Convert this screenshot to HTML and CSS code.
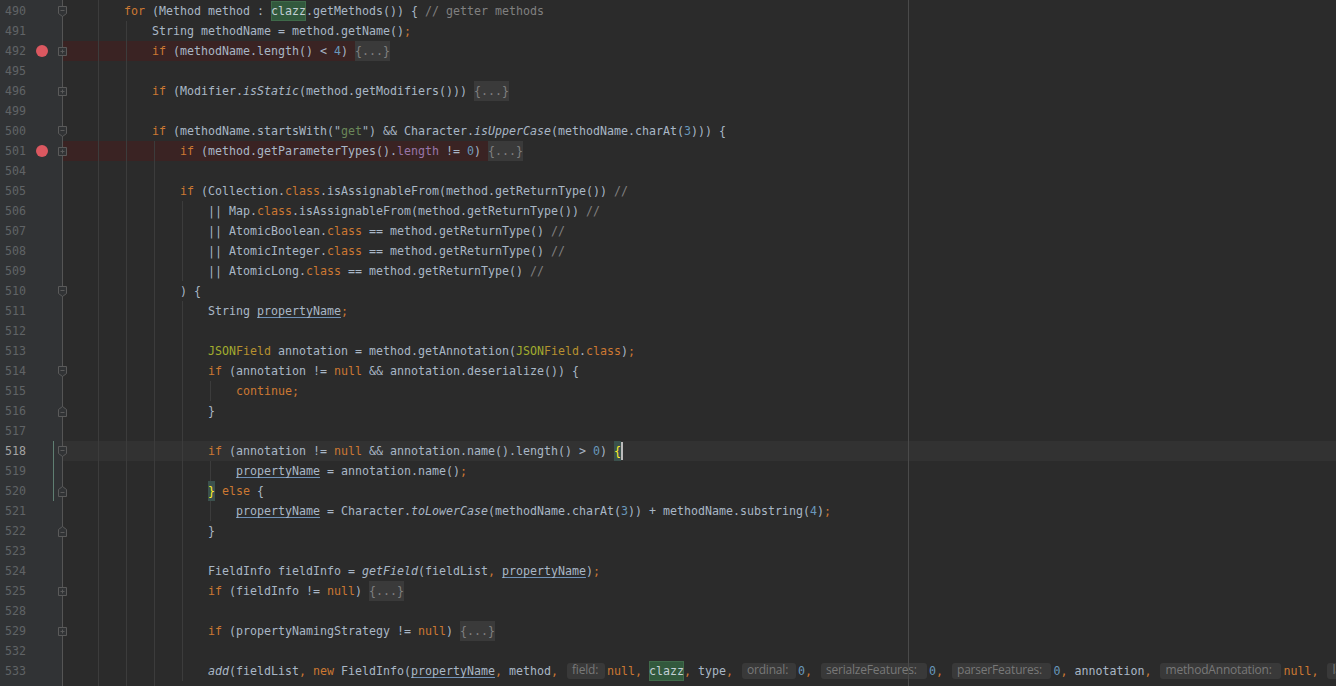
FILE: index.html
```html
<!DOCTYPE html>
<html lang="en">
<head>
  <meta charset="UTF-8" />
  <title>FieldInfo parser - editor</title>
  <link rel="stylesheet" href="styles.css">
</head>
<body>
  <svg class="defs" width="0" height="0">
    <symbol id="fold-plus" viewBox="0 0 9 11"><path d="M.5 1.5h8v8h-8z M2.5 5.5h4 M4.5 3.5v4"/></symbol>
    <symbol id="fold-open" viewBox="0 0 9 11"><path d="M.5.5h8v7l-4 3-4-3z M2.5 4.5h4"/></symbol>
    <symbol id="fold-close" viewBox="0 0 9 11"><path d="M.5 10.5h8v-7l-4-3-4 3z M2.5 6.5h4"/></symbol>
  </svg>

  <div class="editor">
    <div class="guide g98"></div>
    <div class="guide g126"></div>
    <div class="guide g154"></div>
    <div class="guide g182a"></div>
    <div class="guide g182b"></div>
    <div class="guide g210a"></div>
    <div class="guide g210b"></div>
    <div class="guide g210c"></div>
    <div class="margin-line"></div>
    <div class="change-bar"></div>

    <div class="row"><div class="gutter"><span class="num">490</span><svg class="fold"><use href="#fold-open"/></svg></div><div class="code">        <b>for</b> (Method method : <span class="hl">clazz</span>.getMethods()) { <span class="c">// getter methods</span></div></div>
    <div class="row"><div class="gutter"><span class="num">491</span></div><div class="code">            String methodName = method.getName()<b>;</b></div></div>
    <div class="row bp"><div class="gutter"><span class="num">492</span><span class="dot"></span><svg class="fold"><use href="#fold-plus"/></svg></div><div class="code"><span class="bp-text">            <b>if</b> (methodName.length() &lt; <span class="n">4</span>) </span><span class="ph">{...}</span></div></div>
    <div class="row"><div class="gutter"><span class="num">495</span></div><div class="code"></div></div>
    <div class="row"><div class="gutter"><span class="num">496</span><svg class="fold"><use href="#fold-plus"/></svg></div><div class="code">            <b>if</b> (Modifier.<em>isStatic</em>(method.getModifiers())) <span class="ph">{...}</span></div></div>
    <div class="row"><div class="gutter"><span class="num">499</span></div><div class="code"></div></div>
    <div class="row"><div class="gutter"><span class="num">500</span><svg class="fold"><use href="#fold-open"/></svg></div><div class="code">            <b>if</b> (methodName.startsWith("<span class="s">get</span>") &amp;&amp; Character.<em>isUpperCase</em>(methodName.charAt(<span class="n">3</span>))) {</div></div>
    <div class="row bp"><div class="gutter"><span class="num">501</span><span class="dot"></span><svg class="fold"><use href="#fold-plus"/></svg></div><div class="code"><span class="bp-text">                <b>if</b> (method.getParameterTypes().<span class="f">length</span> != <span class="n">0</span>) </span><span class="ph">{...}</span></div></div>
    <div class="row"><div class="gutter"><span class="num">504</span></div><div class="code"></div></div>
    <div class="row"><div class="gutter"><span class="num">505</span></div><div class="code">                <b>if</b> (Collection.<b>class</b>.isAssignableFrom(method.getReturnType()) <span class="c">//</span></div></div>
    <div class="row"><div class="gutter"><span class="num">506</span></div><div class="code">                    || Map.<b>class</b>.isAssignableFrom(method.getReturnType()) <span class="c">//</span></div></div>
    <div class="row"><div class="gutter"><span class="num">507</span></div><div class="code">                    || AtomicBoolean.<b>class</b> == method.getReturnType() <span class="c">//</span></div></div>
    <div class="row"><div class="gutter"><span class="num">508</span></div><div class="code">                    || AtomicInteger.<b>class</b> == method.getReturnType() <span class="c">//</span></div></div>
    <div class="row"><div class="gutter"><span class="num">509</span></div><div class="code">                    || AtomicLong.<b>class</b> == method.getReturnType() <span class="c">//</span></div></div>
    <div class="row"><div class="gutter"><span class="num">510</span><svg class="fold"><use href="#fold-open"/></svg></div><div class="code">                ) {</div></div>
    <div class="row"><div class="gutter"><span class="num">511</span></div><div class="code">                    String <u>propertyName</u><b>;</b></div></div>
    <div class="row"><div class="gutter"><span class="num">512</span></div><div class="code"></div></div>
    <div class="row"><div class="gutter"><span class="num">513</span></div><div class="code">                    <span class="a1">JSON</span><span class="a2">Field</span> annotation = method.getAnnotation(<span class="a1">JSON</span><span class="a2">Field</span>.<b>class</b>)<b>;</b></div></div>
    <div class="row"><div class="gutter"><span class="num">514</span><svg class="fold"><use href="#fold-open"/></svg></div><div class="code">                    <b>if</b> (annotation != <b>null</b> &amp;&amp; annotation.deserialize()) {</div></div>
    <div class="row"><div class="gutter"><span class="num">515</span></div><div class="code">                        <b>continue;</b></div></div>
    <div class="row"><div class="gutter"><span class="num">516</span><svg class="fold"><use href="#fold-close"/></svg></div><div class="code">                    }</div></div>
    <div class="row"><div class="gutter"><span class="num">517</span></div><div class="code"></div></div>
    <div class="row current"><div class="gutter"><span class="num">518</span><svg class="fold"><use href="#fold-open"/></svg></div><div class="code">                    <b>if</b> (annotation != <b>null</b> &amp;&amp; annotation.name().length() &gt; <span class="n">0</span>) <span class="brace">{</span><span class="caret"></span></div></div>
    <div class="row"><div class="gutter"><span class="num">519</span></div><div class="code">                        <u>propertyName</u> = annotation.name()<b>;</b></div></div>
    <div class="row"><div class="gutter"><span class="num">520</span><svg class="fold"><use href="#fold-close"/></svg></div><div class="code">                    <span class="brace">}</span> <b>else</b> {</div></div>
    <div class="row"><div class="gutter"><span class="num">521</span></div><div class="code">                        <u>propertyName</u> = Character.<em>toLowerCase</em>(methodName.charAt(<span class="n">3</span>)) + methodName.substring(<span class="n">4</span>)<b>;</b></div></div>
    <div class="row"><div class="gutter"><span class="num">522</span><svg class="fold"><use href="#fold-close"/></svg></div><div class="code">                    }</div></div>
    <div class="row"><div class="gutter"><span class="num">523</span></div><div class="code"></div></div>
    <div class="row"><div class="gutter"><span class="num">524</span></div><div class="code">                    FieldInfo fieldInfo = <em>getField</em>(fieldList<b>,</b> <u>propertyName</u>)<b>;</b></div></div>
    <div class="row"><div class="gutter"><span class="num">525</span><svg class="fold"><use href="#fold-plus"/></svg></div><div class="code">                    <b>if</b> (fieldInfo != <b>null</b>) <span class="ph">{...}</span></div></div>
    <div class="row"><div class="gutter"><span class="num">528</span></div><div class="code"></div></div>
    <div class="row"><div class="gutter"><span class="num">529</span><svg class="fold"><use href="#fold-plus"/></svg></div><div class="code">                    <b>if</b> (propertyNamingStrategy != <b>null</b>) <span class="ph">{...}</span></div></div>
    <div class="row"><div class="gutter"><span class="num">532</span></div><div class="code"></div></div>
    <div class="row"><div class="gutter"><span class="num">533</span></div><div class="code">                    <em>add</em>(fieldList<b>,</b> <b>new</b> FieldInfo(<u>propertyName</u><b>,</b> method<b>,</b> <span class="hint w38">field:</span><b>null,</b> <span class="hl">clazz</span><b>,</b> type<b>,</b> <span class="hint w54">ordinal:</span><span class="n">0</span><b>,</b> <span class="hint w106">serialzeFeatures:</span><span class="n">0</span><b>,</b> <span class="hint w100">parserFeatures:</span><span class="n">0</span><b>,</b> annotation<b>,</b> <span class="hint w121">methodAnnotation:</span><b>null,</b> <span class="hint w38">label:</span></div></div>
    <div class="row rest"><div class="gutter"></div><div class="code"></div></div>
  </div>
</body>
</html>
```

FILE: styles.css
```css
html, body {
  margin: 0;
  height: 100%;
  overflow: hidden;
}

.defs {
  position: absolute;
}

.editor {
  position: relative;
  display: flex;
  flex-direction: column;
  height: 686px;
  background-color: #2b2b2b;
  font-family: 'DejaVu Sans Mono', monospace;
  font-size: 11.63px;
  color: #a9b7c6;
  overflow: hidden;
}

/* one pixel of gutter above the first line */
.editor::before {
  content: "";
  flex: none;
  width: 62px;
  height: 1px;
  background-color: #313335;
  border-right: 1px solid #555555;
}

/* one editor line */
.row {
  display: flex;
  flex: none;
  height: 20px;
  line-height: 20px;
}

.row.rest {
  flex: 1;
}

.row.current {
  background-color: #323232;
}

.gutter {
  position: relative;
  flex: none;
  box-sizing: border-box;
  width: 63px;
  padding-left: 5px;
  background-color: #313335;
  border-right: 1px solid #555555;
}

.num {
  color: #606366;
}

.current .num {
  color: #a4a3a3;
}

.dot {
  position: absolute;
  left: 36px;
  top: 4px;
  width: 12px;
  height: 12px;
  border-radius: 50%;
  background-color: #db5860;
}

.fold {
  position: absolute;
  left: 58px;
  top: 5px;
  width: 9px;
  height: 11px;
  fill: #313335;
  stroke: #5a5a5a;
  stroke-width: 1;
}

.code {
  flex: 1;
  padding-left: 5px;
  white-space: pre;
}

/* the breakpoint tint stops where the folded block starts */
.bp .code {
  display: flex;
  padding-left: 0;
}

.bp-text {
  padding-left: 5px;
  background-color: #3a2323;
}

/* syntax colours */
.code b {
  font-weight: normal;
  color: #cc7832;
}

.code em {
  font-style: italic;
}

.code u {
  text-decoration-color: #6e8fb5;
  text-underline-offset: 2px;
}

.c {
  color: #808080;
}

.n {
  color: #6897bb;
}

.s {
  color: #6a8759;
}

.f {
  color: #9876aa;
}

.a1 {
  color: #a2ad2e;
}

.a2 {
  color: #b6902f;
}

.hl {
  display: inline-block;
  height: 20px;
  background-color: #32593d;
  color: #c4cfd6;
  box-shadow: inset 0 0 0 1px #3f6a4a;
}

.ph {
  display: inline-block;
  height: 20px;
  background-color: #3a3a3a;
  color: #808080;
}

.brace {
  display: inline-block;
  height: 20px;
  background-color: #3b514d;
  color: #ffef28;
}

.caret {
  position: absolute;
  width: 2px;
  height: 18px;
  margin-top: 1px;
  background-color: #bbbbbb;
}

/* parameter name hints */
.hint {
  display: inline-block;
  vertical-align: top;
  box-sizing: border-box;
  height: 16px;
  margin: 2px 2px 0;
  padding-left: 5px;
  border-radius: 3px;
  background-color: #393939;
  color: #787878;
  font-family: 'Open Sans', sans-serif;
  font-size: 12px;
  line-height: 14px;
  letter-spacing: -0.2px;
}

.w38 { width: 38px; }
.w54 { width: 54px; }
.w100 { width: 99.5px; }
.w106 { width: 106px; }
.w121 { width: 121px; }

/* indent guides, drawn over the lines */
.guide {
  position: absolute;
  width: 1px;
  background-color: #3c3c3c;
}

.g98 { left: 98px; top: 0; bottom: 0; }
.g126 { left: 126px; top: 21px; bottom: 0; }
.g154 { left: 154px; top: 141px; bottom: 0; }
.g182a { left: 182px; top: 201px; height: 80px; }
.g182b { left: 182px; top: 301px; height: 380px; }
.g210a { left: 210px; top: 381px; height: 20px; }
.g210b { left: 210px; top: 461px; height: 20px; }
.g210c { left: 210px; top: 501px; height: 20px; }

.margin-line {
  position: absolute;
  left: 908px;
  top: 0;
  bottom: 0;
  width: 1px;
  background-color: #4a4a4a;
  z-index: 2;
}

.change-bar {
  position: absolute;
  left: 53px;
  top: 441px;
  width: 1px;
  height: 60px;
  background-color: #5f7f72;
  z-index: 2;
}
```
